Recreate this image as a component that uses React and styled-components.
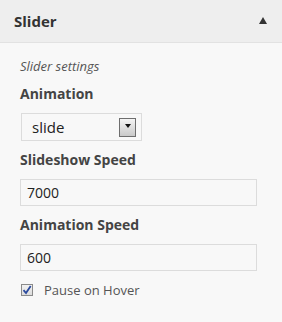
import React from "react";
import styled, { createGlobalStyle } from "styled-components";

const GlobalStyle = createGlobalStyle`
  html, body {
    margin: 0;
    padding: 0;
    background: #f8f8f8;
  }
  body {
    font-family: "Open Sans", "Liberation Sans", sans-serif;
    color: #444;
  }
`;

const Panel = styled.div`
  width: 282px;
  height: 322px;
  background: #f8f8f8;
  overflow: hidden;
`;

const Header = styled.div`
  height: 42px;
  padding: 0 15px 0 14px;
  display: flex;
  align-items: center;
  justify-content: space-between;
  background: #eeeeee;
  border-bottom: 1px solid #e2e2e2;
`;

const Title = styled.h3`
  margin: 0;
  font-size: 15px;
  font-weight: 700;
  color: #333;
`;

const Arrow = styled.span`
  width: 0;
  height: 0;
  border-left: 4px solid transparent;
  border-right: 4px solid transparent;
  border-bottom: 7px solid #333;
  margin-top: -2px;
`;

const Body = styled.div`
  padding: 14px 20px 0 20px;
  display: flex;
  flex-direction: column;
  gap: 9px;
`;

const Note = styled.p`
  margin: 0;
  font-size: 13px;
  line-height: 18px;
  font-style: italic;
  color: #555;
`;

const Label = styled.label`
  display: block;
  font-size: 14px;
  line-height: 20px;
  font-weight: 700;
  color: #444;
`;

const SelectBox = styled.div`
  width: 121px;
  height: 28px;
  margin-left: 1px;
  box-sizing: border-box;
  border: 1px solid #dcdcdc;
  background: #f8f8f8;
  display: flex;
  align-items: center;
  justify-content: space-between;
  padding: 0 5px 0 10px;
  font-size: 15px;
  color: #222;
`;

const DropButton = styled.span`
  width: 17px;
  height: 19px;
  box-sizing: border-box;
  border: 1px solid #6e6e6e;
  background: linear-gradient(#f4f4f4, #c9c9c9);
  display: flex;
  align-items: center;
  justify-content: center;

  &::after {
    content: "";
    border-left: 3.5px solid transparent;
    border-right: 3.5px solid transparent;
    border-top: 4px solid #111;
    margin-bottom: 2px;
  }
`;

const TextInput = styled.div`
  width: 237px;
  height: 27px;
  box-sizing: border-box;
  border: 1px solid #dcdcdc;
  background: #f8f8f8;
  display: flex;
  align-items: center;
  padding-left: 6px;
  font-size: 14px;
  color: #222;
`;

const CheckRow = styled.div`
  display: flex;
  align-items: center;
  gap: 11px;
  margin-top: 1px;
  margin-left: 1px;
  font-size: 13px;
  line-height: 18px;
  color: #555;
`;

const Box = styled.span`
  width: 12px;
  height: 12px;
  box-sizing: border-box;
  border: 1px solid #8a8a8a;
  background: linear-gradient(#f2f2f2, #dcdcdc);
  display: flex;
  align-items: center;
  justify-content: center;
`;

function Checkbox() {
  return (
    <Box>
      <svg width="10" height="10" viewBox="0 0 10 10">
        <path d="M1.5 5.2 L4 8 L8.7 1" fill="none" stroke="#2b4a9e" strokeWidth="1.8" />
      </svg>
    </Box>
  );
}

export default function App() {
  return (
    <>
      <GlobalStyle />
      <Panel>
        <Header>
          <Title>Slider</Title>
          <Arrow />
        </Header>
        <Body>
          <Note>Slider settings</Note>
          <Label>Animation</Label>
          <SelectBox>
            slide
            <DropButton />
          </SelectBox>
          <Label>Slideshow Speed</Label>
          <TextInput>7000</TextInput>
          <Label>Animation Speed</Label>
          <TextInput>600</TextInput>
          <CheckRow>
            <Checkbox />
            Pause on Hover
          </CheckRow>
        </Body>
      </Panel>
    </>
  );
}
